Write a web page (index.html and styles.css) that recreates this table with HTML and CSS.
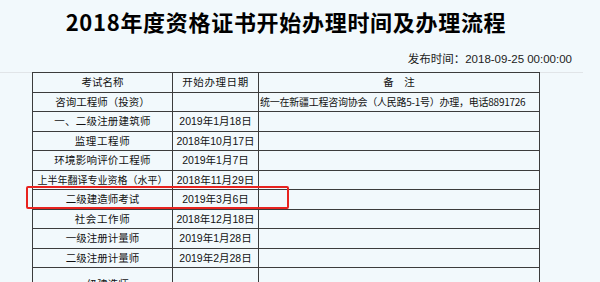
FILE: index.html
```html
<!DOCTYPE html>
<html lang="zh-CN">
<head>
<meta charset="utf-8">
<title>2018年度资格证书开始办理时间及办理流程</title>
<link rel="stylesheet" href="styles.css">
</head>
<body>
<div class="page">
  <header class="head">
    <h1 class="title">2018年度资格证书开始办理时间及办理流程</h1>
    <div class="meta">发布时间：2018-09-25 00:00:00</div>
  </header>
  <div class="rule"></div>
  <div class="table-wrap">
    <table class="grid">
      <colgroup>
        <col class="c1"><col class="c2"><col class="c3">
      </colgroup>
      <tr class="hdr">
        <td>考试名称</td>
        <td class="sp1">开始办理日期</td>
        <td>备&emsp;注</td>
      </tr>
      <tr>
        <td>咨询工程师（投资）</td>
        <td></td>
        <td class="note">统一在新疆工程咨询协会（人民路5-1号）办理，电话8891726</td>
      </tr>
      <tr><td class="sp0">一、二级注册建筑师</td><td class="date">2019年1月18日</td><td></td></tr>
      <tr><td class="sp1">监理工程师</td><td class="date">2018年10月17日</td><td></td></tr>
      <tr><td class="sp0">环境影响评价工程师</td><td class="date">2019年1月7日</td><td></td></tr>
      <tr><td class="tight">上半年翻译专业资格（水平）</td><td class="date">2018年11月29日</td><td></td></tr>
      <tr><td>二级建造师考试</td><td class="date">2019年3月6日</td><td></td></tr>
      <tr><td class="sp1">社会工作师</td><td class="date">2018年12月18日</td><td></td></tr>
      <tr><td>一级注册计量师</td><td class="date">2019年1月28日</td><td></td></tr>
      <tr><td>二级注册计量师</td><td class="date">2019年2月28日</td><td></td></tr>
      <tr class="tall"><td>一级建造师</td><td></td><td></td></tr>
    </table>
    <div class="mark"></div>
  </div>
</div>
</body>
</html>
```

FILE: styles.css
```css
html, body {
  margin: 0;
  padding: 0;
  background: #f2f9fc;
}
body {
  font-family: "Liberation Sans", "Noto Sans CJK SC", sans-serif;
  color: #111;
  overflow: hidden;
}
.page {
  width: 600px;
}
.head {
  width: 572px;
  padding-top: 8px;
}
.title {
  margin: 0;
  font-family: "Noto Sans CJK SC", sans-serif;
  font-size: 22px;
  line-height: 26px;
  font-weight: 700;
  text-align: center;
  color: #000;
  letter-spacing: 0.7px;
}
.meta {
  margin-top: 17px;
  font-family: "Liberation Sans", "Noto Sans CJK SC", sans-serif;
  font-size: 11.5px;
  line-height: 16px;
  text-align: right;
  color: #222;
  height: 21px;
}
.rule {
  width: 583px;
  height: 1px;
  background: #e1e5e8;
}
.table-wrap {
  position: relative;
  padding-left: 32px;
  margin-top: -1px;
}
.grid {
  border-collapse: collapse;
  table-layout: fixed;
  width: 507px;
  font-family: "Noto Sans CJK SC", sans-serif;
  font-size: 10.5px;
  color: #111;
}
.c1 { width: 140px; }
.c2 { width: 86px; }
.c3 { width: 281px; }
.grid td {
  border: 1px solid #3c3c3c;
  height: 18.5px;
  padding: 0;
  text-align: center;
  vertical-align: middle;
  line-height: 14px;
  white-space: nowrap;
  overflow: visible;
}
.grid td.note {
  text-align: left;
  font-size: 10px;
  letter-spacing: -0.25px;
  padding-left: 1px;
}
.grid td.date {
  font-family: "Liberation Sans", "Noto Sans CJK SC", sans-serif;
  font-size: 10.5px;
}
.sp0 { letter-spacing: 0.2px; }
.sp1 { letter-spacing: 0.6px; }
.tight { font-size: 10px; letter-spacing: 0; }
.grid tr.tall td {
  height: 36px;
  vertical-align: top;
  padding-top: 9px;
  line-height: 14px;
}
.mark {
  position: absolute;
  left: 26px;
  top: 114px;
  width: 259px;
  height: 19px;
  border: 2px solid #e8231f;
  border-radius: 2px;
}
```
